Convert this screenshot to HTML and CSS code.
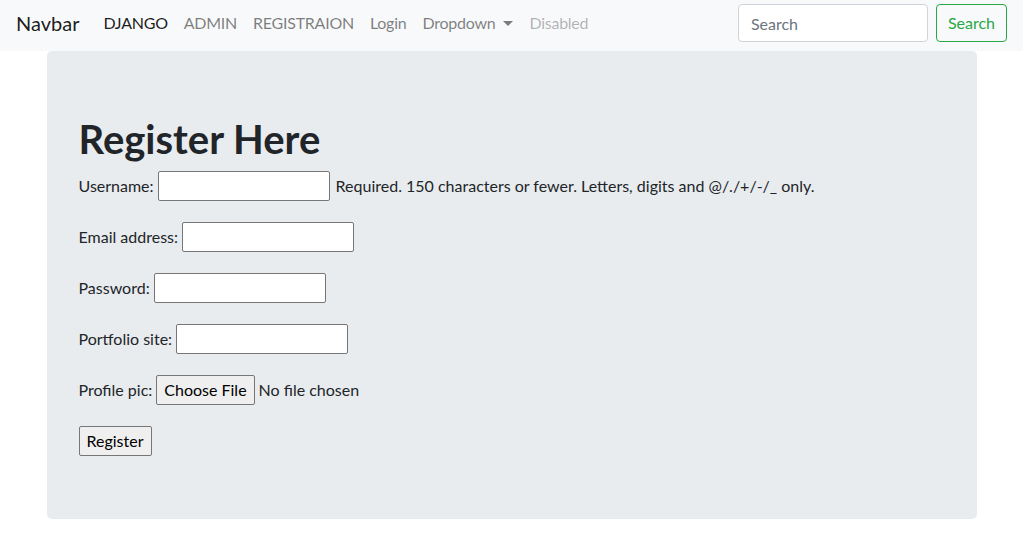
FILE: index.html
```html
<!DOCTYPE html>
<html lang="en">
<head>
<meta charset="utf-8">
<title>Register</title>
<link rel="stylesheet" href="styles.css">
</head>
<body>
<nav class="navbar">
  <a class="brand" href="#">Navbar</a>
  <ul class="nav">
    <li><a class="nav-link active" href="#">DJANGO</a></li>
    <li><a class="nav-link" href="#">ADMIN</a></li>
    <li><a class="nav-link" href="#">REGISTRAION</a></li>
    <li><a class="nav-link" href="#">Login</a></li>
    <li><a class="nav-link dropdown" href="#">Dropdown<span class="caret"></span></a></li>
    <li><a class="nav-link disabled" href="#">Disabled</a></li>
  </ul>
  <form class="search">
    <input class="search-input" type="search" placeholder="Search">
    <button class="search-btn" type="button">Search</button>
  </form>
</nav>
<main class="container">
  <section class="jumbotron">
    <h1 class="title">Register Here</h1>
    <form class="reg-form">
      <p class="row"><label>Username:</label><input class="field" type="text"><span class="help">Required. 150 characters or fewer. Letters, digits and @/./+/-/_ only.</span></p>
      <p class="row"><label>Email address:</label><input class="field" type="text"></p>
      <p class="row"><label>Password:</label><input class="field" type="password"></p>
      <p class="row"><label>Portfolio site:</label><input class="field" type="text"></p>
      <p class="row"><label>Profile pic:</label><span class="file-btn">Choose File</span><span class="file-text">No file chosen</span></p>
      <div class="row"><button class="submit" type="button">Register</button></div>
    </form>
  </section>
</main>
</body>
</html>
```
FILE: styles.css
```css
* { box-sizing: border-box; }
html, body { margin: 0; padding: 0; }
body {
  font-family: "Lato", "Open Sans", sans-serif;
  font-size: 16px;
  line-height: 1.5;
  color: #212529;
  background: #fff;
}
a { text-decoration: none; }

.navbar {
  height: 51px;
  background: #f8f9fa;
  display: flex;
  align-items: center;
  padding: 0 16px 5px 16px;
}
.brand {
  font-size: 20px;
  color: rgba(0,0,0,.9);
  margin-right: 16px;
  line-height: 30px;
}
.nav {
  list-style: none;
  margin: 0;
  padding: 0;
  display: flex;
  flex: 1;
}
.nav-link {
  display: block;
  padding: 8px 8px;
  color: rgba(0,0,0,.5);
  letter-spacing: -0.25px;
}
.nav-link.active { color: rgba(0,0,0,.9); }
.nav-link.disabled { color: rgba(0,0,0,.3); }
.caret {
  display: inline-block;
  margin-left: 8px;
  vertical-align: 3px;
  border-top: 5px solid rgba(0,0,0,.5);
  border-left: 5px solid transparent;
  border-right: 5px solid transparent;
}
.search { display: flex; align-items: center; }
.search-input {
  width: 190px;
  height: 38px;
  padding: 6px 12px;
  font: inherit;
  color: #495057;
  background: #fff;
  border: 1px solid #ced4da;
  border-radius: 4px;
  margin-right: 8px;
}
.search-input::placeholder { color: #6c757d; }
.search-btn {
  height: 38px;
  padding: 6px 11px;
  font: inherit;
  color: #28a745;
  background: transparent;
  border: 1px solid #28a745;
  border-radius: 4px;
}

.container {
  width: 960px;
  margin: 0 auto;
  padding: 0 15px;
}
.jumbotron {
  background: #e9ecef;
  border-radius: 5px;
  padding: 64px 32px 63px;
}
.title {
  margin: 0 0 8px;
  font-size: 40px;
  font-weight: 700;
  line-height: 48px;
}
.reg-form {
  display: flex;
  flex-direction: column;
  gap: 21px;
}
.row {
  margin: 0;
  height: 30px;
  display: flex;
  align-items: center;
  gap: 4px;
}
.field {
  width: 172px;
  height: 30px;
  border: 1px solid #767676;
  border-radius: 2px;
  background: #fff;
  padding: 1px 2px;
  font: inherit;
  margin: 0;
}
.help { margin-left: 2px; }
.file-btn, .submit {
  display: inline-flex;
  align-items: center;
  height: 30px;
  padding: 0 7px;
  background: #efefef;
  border: 1px solid #767676;
  border-radius: 2px;
  font: inherit;
  color: #000;
}
.file-text { margin-left: 0; }
```
